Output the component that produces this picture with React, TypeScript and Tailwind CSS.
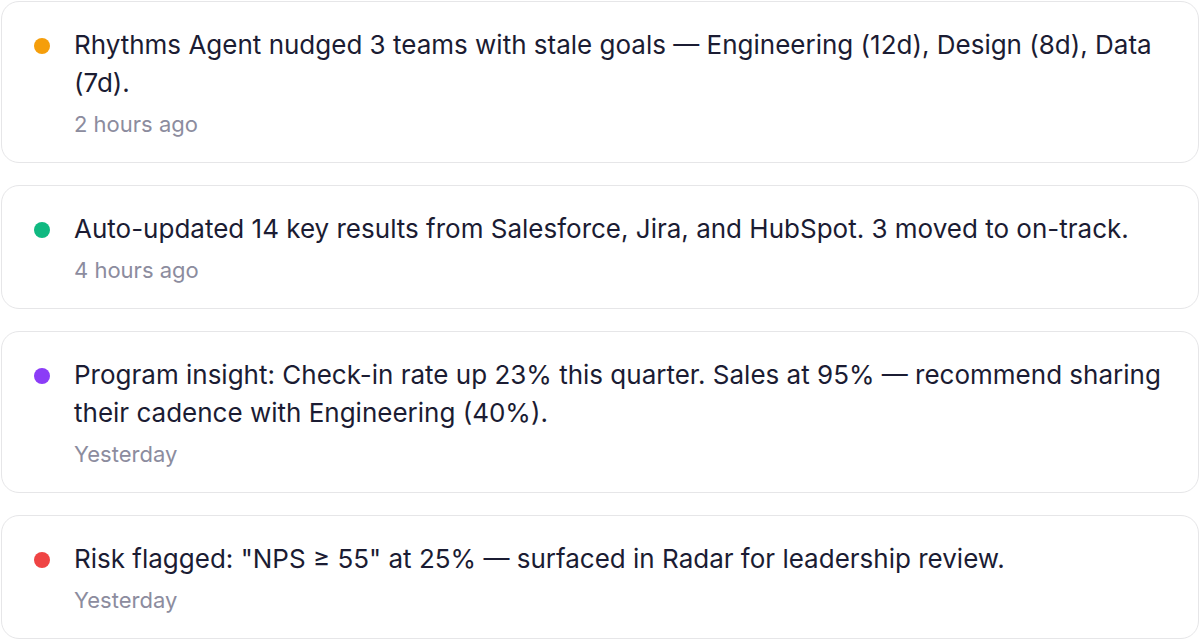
const items = [
  {
    dot: 'bg-[#f59e0b]',
    text: 'Rhythms Agent nudged 3 teams with stale goals — Engineering (12d), Design (8d), Data (7d).',
    time: '2 hours ago',
  },
  {
    dot: 'bg-[#10b981]',
    text: 'Auto-updated 14 key results from Salesforce, Jira, and HubSpot. 3 moved to on-track.',
    time: '4 hours ago',
  },
  {
    dot: 'bg-[#8b3cf7]',
    text: 'Program insight: Check-in rate up 23% this quarter. Sales at 95% — recommend sharing their cadence with Engineering (40%).',
    time: 'Yesterday',
  },
  {
    dot: 'bg-[#ef4444]',
    text: 'Risk flagged: "NPS ≥ 55" at 25% — surfaced in Radar for leadership review.',
    time: 'Yesterday',
  },
];

export default function App() {
  return (
    <div
      className="flex h-[640px] w-[1200px] flex-col gap-[22px] bg-white p-px"
      style={{ fontFamily: 'Inter, "Noto Sans", sans-serif' }}
    >
      {items.map((item, i) => (
        <div
          key={i}
          className="flex items-start gap-6 rounded-[18px] border border-[#e6e6e8] bg-white px-8 py-6"
        >
          <span className={`mt-3 h-4 w-4 shrink-0 rounded-full ${item.dot}`} />
          <div className="min-w-0 flex-1">
            <p className="text-[26px] leading-[38px] text-[#1b1c33]">{item.text}</p>
            <p className="mt-2 text-[22px] leading-[28px] text-[#8c8c9e]">{item.time}</p>
          </div>
        </div>
      ))}
    </div>
  );
}
